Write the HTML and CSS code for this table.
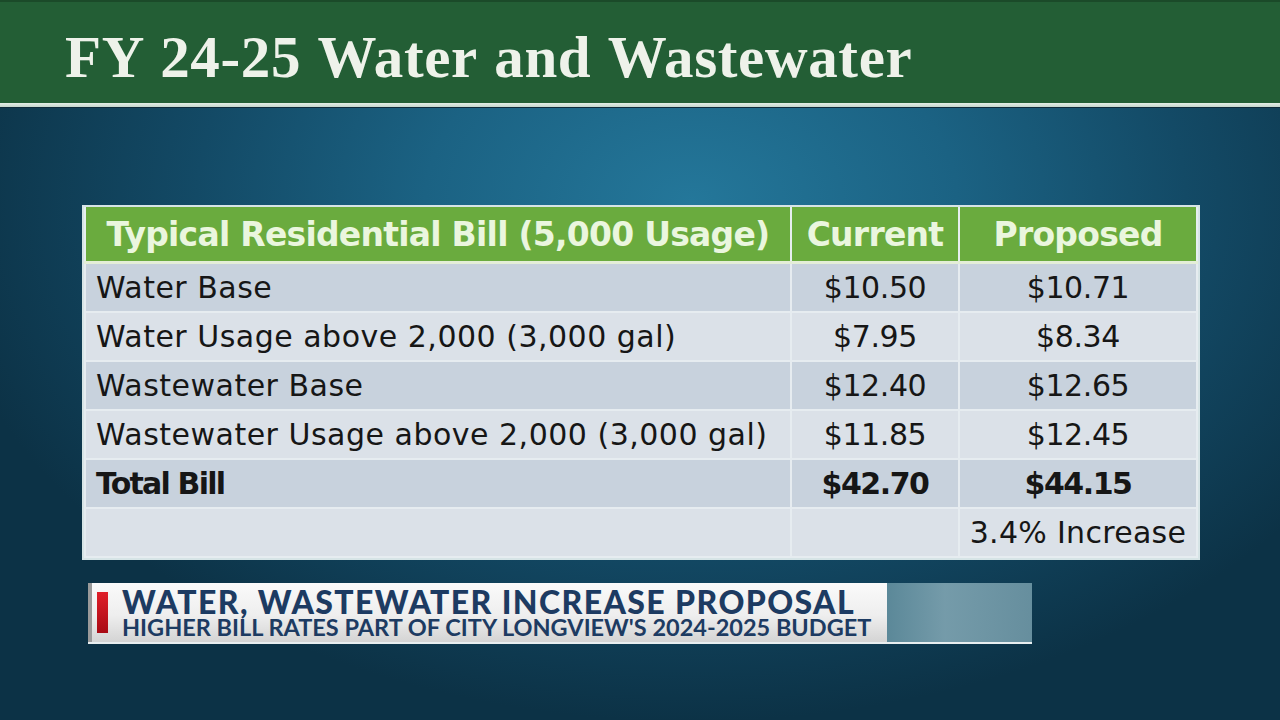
FILE: index.html
```html
<!DOCTYPE html>
<html lang="en">
<head>
<meta charset="utf-8">
<title>FY 24-25 Water and Wastewater</title>
<link rel="stylesheet" href="styles.css">
</head>
<body>
<div class="slide">
  <header class="title-bar">
    <h1 class="title">FY 24-25 Water and Wastewater</h1>
  </header>
  <div class="rule"></div>
  <main class="content">
    <table class="bill">
      <colgroup>
        <col class="c1"><col class="c2"><col class="c3">
      </colgroup>
      <thead>
        <tr>
          <th>Typical Residential Bill (5,000 Usage)</th>
          <th>Current</th>
          <th>Proposed</th>
        </tr>
      </thead>
      <tbody>
        <tr class="dark"><td class="label">Water Base</td><td>$10.50</td><td>$10.71</td></tr>
        <tr class="light"><td class="label">Water Usage above 2,000 (3,000 gal)</td><td>$7.95</td><td>$8.34</td></tr>
        <tr class="dark"><td class="label">Wastewater Base</td><td>$12.40</td><td>$12.65</td></tr>
        <tr class="light"><td class="label">Wastewater Usage above 2,000 (3,000 gal)</td><td>$11.85</td><td>$12.45</td></tr>
        <tr class="dark total"><td class="label">Total Bill</td><td>$42.70</td><td>$44.15</td></tr>
        <tr class="light"><td class="label"></td><td></td><td class="note">3.4% Increase</td></tr>
      </tbody>
    </table>
  </main>
  <div class="lower-third">
    <div class="chyron">
      <span class="red-tab"></span>
      <div class="chyron-text">
        <div class="headline">WATER, WASTEWATER INCREASE PROPOSAL</div>
        <div class="subline">HIGHER BILL RATES PART OF CITY LONGVIEW'S 2024-2025 BUDGET</div>
      </div>
    </div>
    <div class="chyron-tail"></div>
  </div>
</div>
</body>
</html>
```
FILE: styles.css
```css
html, body {
  margin: 0;
  padding: 0;
}
body {
  width: 1280px;
  height: 720px;
  overflow: hidden;
  background: #0d3449;
}
.slide {
  position: relative;
  width: 1280px;
  height: 720px;
  background:
    radial-gradient(ellipse 760px 520px at 54% 28%, #24779a 0%, #1b6283 35%, #134a66 65%, #0c3246 100%);
  display: flex;
  flex-direction: column;
}
.title-bar {
  height: 103px;
  background: #235e35;
  border-top: 2px solid #1b4a29;
  box-sizing: border-box;
  display: flex;
  align-items: center;
  padding-left: 65px;
}
.title {
  margin: 0;
  margin-top: 9px;
  font-family: "Liberation Serif", "DejaVu Serif", serif;
  font-weight: bold;
  font-size: 59px;
  color: #eef2ea;
  letter-spacing: 0.65px;
  word-spacing: 2px;
}
.rule {
  height: 4px;
  background: linear-gradient(#e4eee6, #c5d6cc);
  border-bottom: 1px solid #0e2a3a;
}
.content {
  padding: 99px 0 0 84px;
}
.bill {
  border-collapse: collapse;
  width: 1112px;
  table-layout: fixed;
  font-family: "DejaVu Sans", "Liberation Sans", sans-serif;
  color: #161616;
  outline: 2px solid #d6e4e6;
}
.c1 { width: 706px; }
.c2 { width: 168px; }
.c3 { width: 238px; }
.bill th {
  height: 54px;
  background: #6aab3e;
  color: #eaf6de;
  font-size: 33px;
  font-weight: bold;
  letter-spacing: -0.75px;
  padding: 0;
  text-align: center;
  border: 2px solid #e6eef0;
  border-top: none;
  border-bottom: 3px solid #e4eed8;
}
.bill td {
  height: 49px;
  padding: 0;
  text-align: center;
  font-size: 30px;
  letter-spacing: -0.4px;
  border: 2px solid #e6ecf0;
  box-sizing: border-box;
}
.bill td.label {
  text-align: left;
  padding-left: 10px;
  letter-spacing: 0.5px;
}
.bill td.note {
  letter-spacing: 0.3px;
}
.bill tr.dark td { background: #c8d2dd; }
.bill tr.light td { background: #dbe1e8; }
.bill tr.total td {
  font-weight: bold;
  letter-spacing: -1.5px;
}
.bill tr.total td.label {
  letter-spacing: -1.8px;
}
.lower-third {
  position: absolute;
  left: 88px;
  top: 583px;
  width: 944px;
  height: 61px;
  display: flex;
  border-bottom: 2px solid #e8eef0;
  box-sizing: border-box;
}
.chyron {
  width: 799px;
  display: flex;
  align-items: center;
  background: linear-gradient(#fafafa 0%, #eeeeee 55%, #d4d4d4 100%);
  border-left: 4px solid #9a9a9a;
  box-sizing: border-box;
  padding-left: 5px;
}
.red-tab {
  width: 11px;
  height: 41px;
  background: linear-gradient(#e0202a, #a80a14);
  flex: none;
}
.chyron-text {
  margin-left: 14px;
  font-family: "Lato", "Open Sans", sans-serif;
  color: #1d3b62;
}
.headline {
  font-size: 32px;
  line-height: 29px;
  font-weight: 900;
  letter-spacing: 1.4px;
}
.subline {
  font-size: 23.5px;
  line-height: 22px;
  font-weight: bold;
}
.chyron-tail {
  flex: 1;
  background: linear-gradient(90deg, #5f8c9c 0%, #7aa0ae 40%, #6b93a2 100%);
  opacity: 0.95;
}
```
